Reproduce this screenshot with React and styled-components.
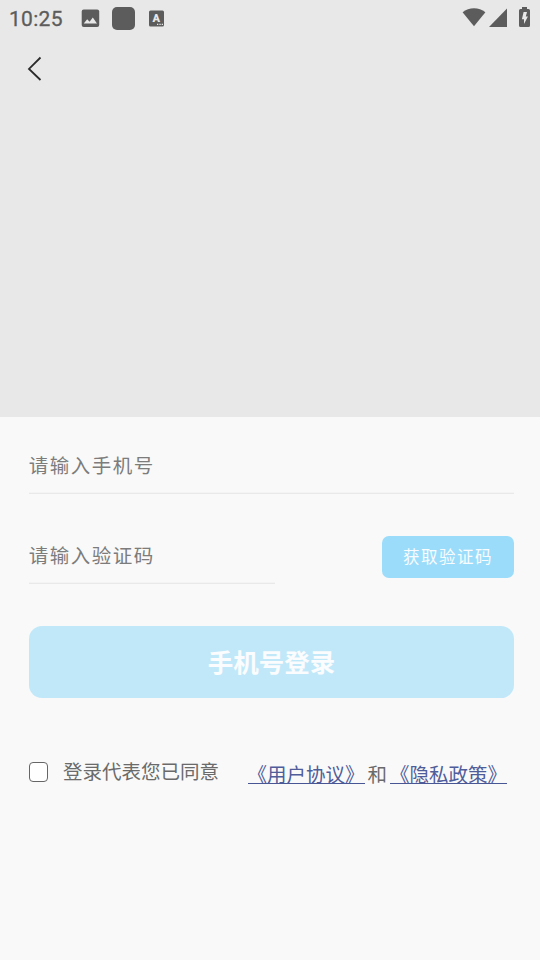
import React, { useState } from "react";
import styled, { createGlobalStyle } from "styled-components";

const GlobalStyle = createGlobalStyle`
  * {
    box-sizing: border-box;
  }

  body {
    margin: 0;
    background-color: #f9f9f9;
    font-family: "Noto Sans CJK SC", "Noto Sans", sans-serif;
  }
`;

const Page = styled.div`
  width: 540px;
  height: 960px;
  overflow: hidden;
  background-color: #f9f9f9;
`;

const Header = styled.header`
  height: 417px;
  background-color: #e8e8e8;
`;

const StatusBar = styled.div`
  display: flex;
  align-items: center;
  height: 36px;
  padding: 0 10px 0 9px;
  color: #5c5c5c;
`;

const Clock = styled.span`
  width: 72px;
  padding-top: 2px;
  font-family: Roboto, sans-serif;
  font-size: 21px;
  font-weight: 400;
  line-height: 24px;
  letter-spacing: 0.3px;
  -webkit-text-stroke: 0.3px #5c5c5c;
`;

const StatusIcon = styled.svg`
  display: block;
  flex: none;
  margin-left: ${(props) => props.$gap || 0}px;
`;

const SignalIcons = styled.div`
  display: flex;
  align-items: center;
  padding-bottom: 2px;
`;

const AppBlock = styled.span`
  width: 23px;
  height: 23px;
  margin-left: 12px;
  border-radius: 5px;
  background-color: #5c5c5c;
`;

const Spacer = styled.div`
  flex: 1;
`;

const BackButton = styled.button`
  display: block;
  margin: 18px 0 0 24px;
  padding: 0;
  border: none;
  background: none;
  cursor: pointer;

  svg {
    display: block;
  }
`;

const Form = styled.form`
  padding: 0 26px 0 29px;
`;

const Row = styled.div`
  display: flex;
  justify-content: space-between;
`;

const Input = styled.input`
  width: ${(props) => props.$width};
  height: ${(props) => props.$height}px;
  padding: ${(props) => props.$height - 49}px 0 11px;
  border: none;
  border-radius: 0;
  background: linear-gradient(#f4f4f4 50%, #e9e9e9 50%) bottom / 100% 2px
    no-repeat;
  color: #333333;
  font-family: inherit;
  font-size: 19.5px;
  line-height: 28px;
  letter-spacing: 1.5px;
  text-indent: -0.3px;

  &::placeholder {
    color: #7c7c7c;
    opacity: 1;
  }

  &:focus {
    outline: none;
  }
`;

const CodeButton = styled.button`
  width: 132px;
  height: 42px;
  margin-top: 42px;
  padding: 0 0 2px;
  border: none;
  border-radius: 7px;
  background-color: #9bdcfa;
  color: #f9fcfe;
  font-family: inherit;
  font-size: 16.5px;
  line-height: 40px;
  letter-spacing: 1.5px;
  cursor: pointer;
`;

const LoginButton = styled.button`
  display: block;
  width: 100%;
  height: 72px;
  margin-top: 42px;
  padding: 0 0 3px;
  border: none;
  border-radius: 13px;
  background-color: #c1e8f9;
  color: #fafcfd;
  font-family: inherit;
  font-size: 25.5px;
  font-weight: 700;
  cursor: pointer;
`;

const Agreement = styled.div`
  display: flex;
  margin-top: 58px;
  color: #6a6a6a;
  font-size: 19.5px;
  line-height: 30px;
  white-space: nowrap;
`;

const Checkbox = styled.input`
  appearance: none;
  width: 19px;
  height: 20px;
  margin: 6px 15px 0 0;
  border: 1px solid #666666;
  border-radius: 4px;
  background-color: #ffffff;

  &:checked {
    background-color: #9bdcfa;
  }
`;

const Links = styled.div`
  display: flex;
  gap: 3px;
  margin: 3px 0 0 28.5px;
`;

const Link = styled.a`
  height: 25px;
  border-bottom: 1px solid #485695;
  color: #505d9b;
  text-decoration: none;
`;

const App = () => {
  const [phone, setPhone] = useState("");
  const [code, setCode] = useState("");
  const [agreed, setAgreed] = useState(false);

  return (
    <Page>
      <GlobalStyle />
      <Header>
        <StatusBar>
          <Clock>10:25</Clock>
          <StatusIcon width="19" height="20" viewBox="0 0 19 20">
            <rect x="0.7" y="1.5" width="17.5" height="17.5" rx="2" fill="currentColor" />
            <path
              d="M2.7 15.5 L6.2 11.2 L8.6 13.7 L11.8 9.5 L16 15.5Z"
              fill="#e8e8e8"
            />
          </StatusIcon>
          <AppBlock />
          <StatusIcon $gap={13} width="17" height="17" viewBox="0 0 17 17">
            <rect x="1" y="0.5" width="15" height="16" rx="1.5" fill="currentColor" />
            <text
              x="8.3"
              y="12"
              fill="#e8e8e8"
              fontFamily="Roboto, sans-serif"
              fontSize="11"
              fontWeight="900"
              textAnchor="middle"
            >
              A
            </text>
            <path
              d="M9 14.4h1.3M11.4 14.4h1.3M13.7 14.4h1.3"
              stroke="#e8e8e8"
              strokeWidth="1.2"
            />
          </StatusIcon>
          <Spacer />
          <SignalIcons>
            <StatusIcon width="24" height="20" viewBox="0 0 24 20">
              <path
                d="M0.6 5.2 C7 -0.2 17 -0.2 23.4 5.2 L12 19.3Z"
                fill="currentColor"
              />
            </StatusIcon>
            <StatusIcon $gap={3} width="18" height="20" viewBox="0 0 18 20">
              <path d="M18 1.5 V20 H0Z" fill="currentColor" />
            </StatusIcon>
            <StatusIcon $gap={12} width="11" height="20" viewBox="0 0 11 20">
              <path
                d="M3 0h5v2h1.5a1.5 1.5 0 0 1 1.5 1.5v15a1.5 1.5 0 0 1-1.5 1.5h-8A1.5 1.5 0 0 1 0 18.5v-15A1.5 1.5 0 0 1 1.5 2H3Z"
                fill="currentColor"
              />
              <path
                d="M4.6 5 H8 L6.8 9.5 H8.9 L5 17 V12.3 H2.9Z"
                fill="#e8e8e8"
              />
            </StatusIcon>
          </SignalIcons>
        </StatusBar>
        <BackButton type="button" aria-label="返回">
          <svg width="20" height="30" viewBox="0 0 20 30">
            <path
              d="M16.5 3.5 L5 14.9 L16.5 26"
              fill="none"
              stroke="#2b2b2b"
              strokeWidth="1.8"
            />
          </svg>
        </BackButton>
      </Header>
      <Form onSubmit={(e) => e.preventDefault()}>
        <Row>
          <Input
            $width="100%"
            $height={77}
            type="tel"
            placeholder="请输入手机号"
            value={phone}
            onChange={(e) => setPhone(e.target.value)}
          />
        </Row>
        <Row>
          <Input
            $width="246px"
            $height={90}
            type="text"
            placeholder="请输入验证码"
            value={code}
            onChange={(e) => setCode(e.target.value)}
          />
          <CodeButton type="button">获取验证码</CodeButton>
        </Row>
        <LoginButton type="submit">手机号登录</LoginButton>
        <Agreement>
          <Checkbox
            type="checkbox"
            aria-label="同意"
            checked={agreed}
            onChange={(e) => setAgreed(e.target.checked)}
          />
          <span>登录代表您已同意</span>
          <Links>
            <Link href="#">《用户协议》</Link>
            <span>和</span>
            <Link href="#">《隐私政策》</Link>
          </Links>
        </Agreement>
      </Form>
    </Page>
  );
};

export default App;
